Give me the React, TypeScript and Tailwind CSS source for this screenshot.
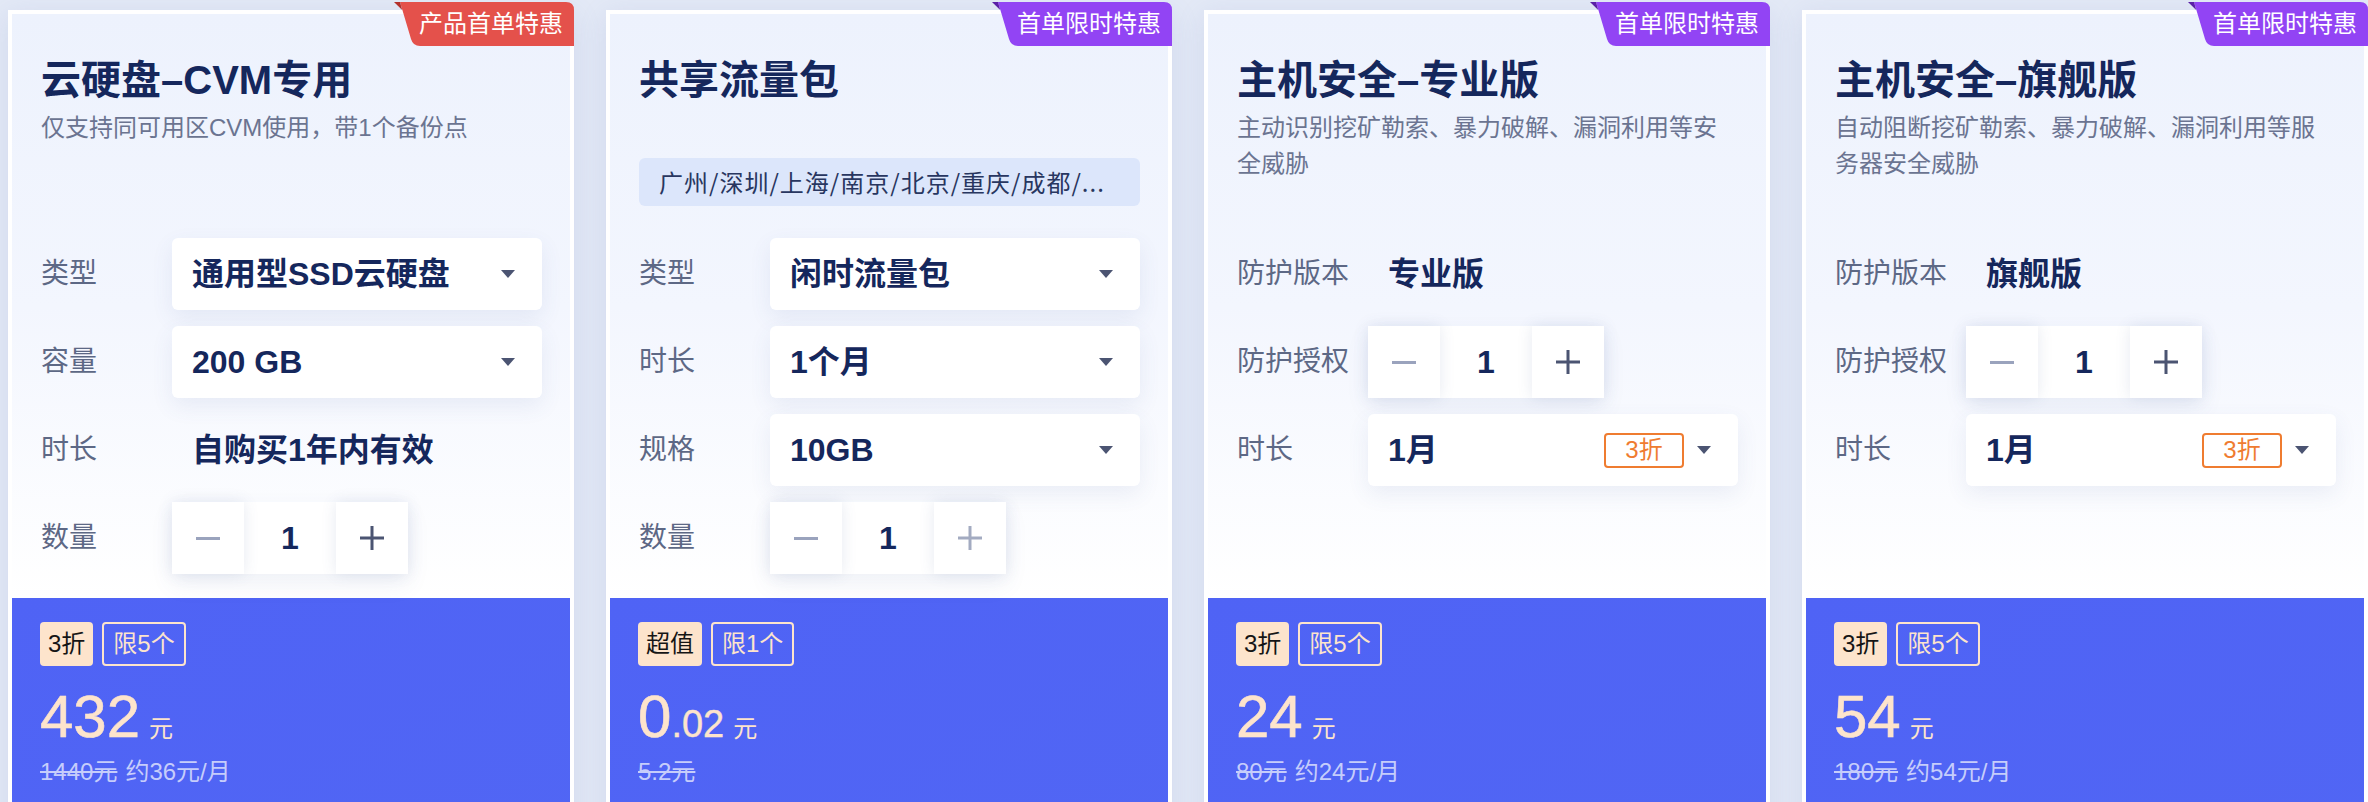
import React from "react";

type Row =
  | { kind: "select"; label: string; value: string; tag?: string }
  | { kind: "static"; label: string; value: string }
  | { kind: "stepper"; label: string; plusDisabled?: boolean };

type Card = {
  badge: string;
  badgeColor: string;
  badgeDark: string;
  title: string;
  desc?: string;
  region?: string;
  rows: Row[];
  tags: [string, string];
  bigInt: string;
  bigDec?: string;
  orig: string;
  per?: string;
};

const cards: Card[] = [
  {
    badge: "产品首单特惠",
    badgeColor: "#e4514b",
    badgeDark: "#b3302b",
    title: "云硬盘–CVM专用",
    desc: "仅支持同可用区CVM使用，带1个备份点",
    rows: [
      { kind: "select", label: "类型", value: "通用型SSD云硬盘" },
      { kind: "select", label: "容量", value: "200 GB" },
      { kind: "static", label: "时长", value: "自购买1年内有效" },
      { kind: "stepper", label: "数量" },
    ],
    tags: ["3折", "限5个"],
    bigInt: "432",
    orig: "1440元",
    per: "约36元/月",
  },
  {
    badge: "首单限时特惠",
    badgeColor: "#9244f4",
    badgeDark: "#5a1fa6",
    title: "共享流量包",
    region: "广州/深圳/上海/南京/北京/重庆/成都/...",
    rows: [
      { kind: "select", label: "类型", value: "闲时流量包" },
      { kind: "select", label: "时长", value: "1个月" },
      { kind: "select", label: "规格", value: "10GB" },
      { kind: "stepper", label: "数量", plusDisabled: true },
    ],
    tags: ["超值", "限1个"],
    bigInt: "0",
    bigDec: ".02",
    orig: "5.2元",
  },
  {
    badge: "首单限时特惠",
    badgeColor: "#9244f4",
    badgeDark: "#5a1fa6",
    title: "主机安全–专业版",
    desc: "主动识别挖矿勒索、暴力破解、漏洞利用等安全威胁",
    rows: [
      { kind: "static", label: "防护版本", value: "专业版" },
      { kind: "stepper", label: "防护授权" },
      { kind: "select", label: "时长", value: "1月", tag: "3折" },
    ],
    tags: ["3折", "限5个"],
    bigInt: "24",
    orig: "80元",
    per: "约24元/月",
  },
  {
    badge: "首单限时特惠",
    badgeColor: "#9244f4",
    badgeDark: "#5a1fa6",
    title: "主机安全–旗舰版",
    desc: "自动阻断挖矿勒索、暴力破解、漏洞利用等服务器安全威胁",
    rows: [
      { kind: "static", label: "防护版本", value: "旗舰版" },
      { kind: "stepper", label: "防护授权" },
      { kind: "select", label: "时长", value: "1月", tag: "3折" },
    ],
    tags: ["3折", "限5个"],
    bigInt: "54",
    orig: "180元",
    per: "约54元/月",
  },
];

function Badge({ text, color, dark }: { text: string; color: string; dark: string }) {
  return (
    <div className="absolute -top-[12px] -right-[4px] z-20 h-[44px] w-[180px]">
      <svg width="180" height="44" viewBox="0 0 180 44" className="absolute left-0 top-0">
        <path d="M6 0 H172 Q180 0 180 8 V44 H26 Q19 44 17 37 Z" fill={color} />
        <polygon points="0,0 6,0 8.2,8" fill={dark} />
      </svg>
      <div className="relative flex h-full items-center justify-end pr-[11px] text-[24px] leading-none text-white">
        {text}
      </div>
    </div>
  );
}

function Caret() {
  return (
    <svg width="14" height="8" viewBox="0 0 14 8" className="shrink-0">
      <polygon points="0,0 14,0 7,8" fill="#4b5472" />
    </svg>
  );
}

function Stepper({ plusDisabled }: { plusDisabled?: boolean }) {
  return (
    <div className="flex h-[72px] shadow-[0_10px_22px_rgba(70,90,150,0.08)]">
      <div className="relative z-10 flex w-[72px] items-center justify-center bg-white shadow-[0_0_14px_rgba(70,90,150,0.13)]">
        <div className="h-[3px] w-[24px] bg-[#9aa3bd]" />
      </div>
      <div className="flex w-[92px] items-center justify-center bg-white text-[32px] font-bold text-[#15275c]">
        1
      </div>
      <div className="relative z-10 flex w-[72px] items-center justify-center bg-white shadow-[0_0_14px_rgba(70,90,150,0.13)]">
        <svg width="24" height="24" viewBox="0 0 24 24">
          <rect x="0" y="10.5" width="24" height="3" fill={plusDisabled ? "#a3abc1" : "#4b5472"} />
          <rect x="10.5" y="0" width="3" height="24" fill={plusDisabled ? "#a3abc1" : "#4b5472"} />
        </svg>
      </div>
    </div>
  );
}

function RowView({ row }: { row: Row }) {
  return (
    <div className="flex h-[72px] items-center">
      <div className="w-[131px] shrink-0 text-[28px] leading-[40px] text-[#5d6885]">{row.label}</div>
      {row.kind === "select" && (
        <div className="flex h-[72px] w-[370px] items-center rounded-[6px] bg-white pl-[20px] pr-[27px] shadow-[0_8px_22px_rgba(70,90,150,0.09)]">
          <span className="text-[32px] font-semibold leading-[40px] text-[#15275c]">{row.value}</span>
          {row.tag ? (
            <span className="ml-auto mr-[13px] flex h-[35px] w-[80px] items-center justify-center rounded-[4px] border-2 border-[#ef7c30] text-[24px] leading-none text-[#ef7c30]">
              {row.tag}
            </span>
          ) : (
            <span className="ml-auto" />
          )}
          <Caret />
        </div>
      )}
      {row.kind === "static" && (
        <div className="pl-[20px] text-[32px] font-bold leading-[40px] text-[#15275c]">{row.value}</div>
      )}
      {row.kind === "stepper" && <Stepper plusDisabled={row.plusDisabled} />}
    </div>
  );
}

function CardView({ c }: { c: Card }) {
  return (
    <div className="relative h-[860px] w-[566px] shrink-0 border-4 border-white bg-white shadow-[0_6px_26px_rgba(110,130,190,0.16)]">
      <Badge text={c.badge} color={c.badgeColor} dark={c.badgeDark} />
      <div className="bg-gradient-to-b from-[#edf2fd] via-[#f3f6fe] to-white pl-[29px] pr-[28px] pt-[38px]">
        <div className="h-[186px]">
          <div className="text-[40px] font-bold leading-[56px] text-[#15275c]">{c.title}</div>
          {c.desc && <div className="mt-[2px] text-[24px] leading-[36px] text-[#6b7491]">{c.desc}</div>}
          {c.region && (
            <div className="mt-[50px] flex h-[48px] w-[501px] items-center rounded-[6px] bg-[#dce6fb] pl-[20px] font-['Noto_Sans_CJK_SC',sans-serif] text-[24px] tracking-[1px] text-[#283660]">
              {c.region}
            </div>
          )}
        </div>
        <div className="flex h-[360px] flex-col gap-[16px]">
          {c.rows.map((r, i) => (
            <RowView key={i} row={r} />
          ))}
        </div>
      </div>
      <div className="h-[300px] bg-gradient-to-br from-[#4f63f5] to-[#5166f4] px-[28px] pt-[24px]">
        <div className="flex gap-[9px]">
          <span className="flex h-[44px] items-center rounded-[4px] bg-[#fde4cc] px-[8px] text-[24px] leading-none text-[#151515]">
            {c.tags[0]}
          </span>
          <span className="flex h-[44px] items-center rounded-[4px] border-2 border-[#fde4cc] px-[9px] text-[24px] leading-none text-[#fde4cc]">
            {c.tags[1]}
          </span>
        </div>
        <div className="mt-[21px] flex items-baseline text-[#fde4cc]">
          <span className="text-[60px] leading-[60px] [-webkit-text-stroke:0.6px_#fde4cc]">{c.bigInt}</span>
          {c.bigDec && <span className="text-[38px] leading-[38px] [-webkit-text-stroke:0.4px_#fde4cc]">{c.bigDec}</span>}
          <span className="ml-[9px] text-[24px] leading-[24px]">元</span>
        </div>
        <div className="mt-[7px] flex text-[24px] leading-[36px] text-[#c6cdfb]">
          <span className="line-through">{c.orig}</span>
          {c.per && <span className="ml-[8px]">{c.per}</span>}
        </div>
      </div>
    </div>
  );
}

export default function App() {
  return (
    <div className="h-[802px] w-[2368px] overflow-hidden bg-[#e3e9f6] font-['Liberation_Sans','Noto_Sans_CJK_SC',sans-serif]">
      <div className="flex gap-[32px] pl-[8px] pt-[10px]">
        {cards.map((c, i) => (
          <CardView key={i} c={c} />
        ))}
      </div>
    </div>
  );
}
